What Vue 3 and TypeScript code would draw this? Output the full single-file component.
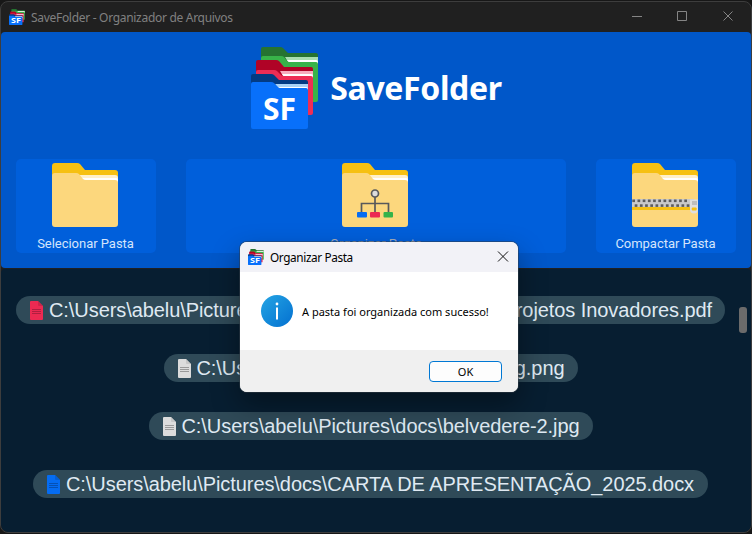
<script setup lang="ts">
interface FileRow {
  head: string
  tail?: string
  color: string
  line: string
  fold: string
  width: number
}

interface Action {
  label: string
  kind: 'plain' | 'tree' | 'zip'
}

const actions: Action[] = [
  { label: 'Selecionar Pasta', kind: 'plain' },
  { label: 'Organizar Pasta', kind: 'tree' },
  { label: 'Compactar Pasta', kind: 'zip' },
]

const files: FileRow[] = [
  { head: 'C:\\Users\\abelu\\Pictures', tail: 'Projetos Inovadores.pdf', color: '#ec2a52', line: '#b01f40', fold: '#c32246', width: 709 },
  { head: 'C:\\Users\\abelu', tail: 'g.png', color: '#dcdcdc', line: '#999999', fold: '#bdbdbd', width: 414 },
  { head: 'C:\\Users\\abelu\\Pictures\\docs\\belvedere-2.jpg', color: '#dcdcdc', line: '#999999', fold: '#bdbdbd', width: 444 },
  { head: 'C:\\Users\\abelu\\Pictures\\docs\\CARTA DE APRESENTAÇÃO_2025.docx', color: '#056cf2', line: '#0451b5', fold: '#0559c8', width: 675 },
]

const teeth = Array.from({ length: 11 }, (_, i) => i)
</script>

<template>
  <svg class="defs" width="0" height="0" aria-hidden="true">
    <symbol id="logo" viewBox="0 0 68 82" overflow="visible">
      <path d="M10 2q0-2 2-2h17q2 0 3 1l5 5h28q2 0 2 2v10H10z" fill="#267331" />
      <path d="M34 10h33v10H40z" fill="#a9dfb0" />
      <path d="M36 13h29q2 0 2 2v6H42z" fill="#fff" />
      <path d="M10 11q0-2 2-2h18q2 0 3 1l3 4q1 1 2 1h27q2 0 2 2v36q0 2-2 2H12q-2 0-2-2z" fill="#38b349" />
      <path d="M5 15q0-2 2-2h18q2 0 3 1l5 6h27q2 0 2 2v10H5z" fill="#b00326" />
      <path d="M29 24h33v10H35z" fill="#f8acbd" />
      <path d="M31 27h29q2 0 2 2v6H37z" fill="#fff" />
      <path d="M5 25q0-2 2-2h16q2 0 3 1l4 4q1 1 2 1h28q2 0 2 2v35q0 2-2 2H7q-2 0-2-2z" fill="#ee2d55" />
      <path d="M0 29q0-2 2-2h18q2 0 3 1l5 5h27q2 0 2 2v10H0z" fill="#033b83" />
      <path d="M24 37h33v9H30z" fill="#a9d2f6" />
      <path d="M26 40h29q2 0 2 2v6H32z" fill="#fff" />
      <path d="M0 37q0-2 2-2h18q2 0 3 1l4 4q1 1 2 1h26q2 0 2 2v37q0 2-2 2H2q-2 0-2-2z" fill="#0870fa" />
    </symbol>
  </svg>

  <div class="window">
    <header class="titlebar">
      <svg class="app-icon" viewBox="0 0 68 82" preserveAspectRatio="none">
        <use href="#logo" width="68" height="82" />
        <text x="9" y="74" class="logo-text small" textLength="42" lengthAdjust="spacingAndGlyphs">SF</text>
      </svg>
      <span class="window-title">SaveFolder - Organizador de Arquivos</span>
      <svg class="controls" width="104" height="12" viewBox="0 0 104 12">
        <path d="M1 5.500h10M46.500 .500h9v9h-9zM92.500 .500l9 9M101.500 .500l-9 9" />
      </svg>
    </header>

    <section class="hero">
      <div class="brand">
        <svg width="68" height="82">
          <use href="#logo" width="68" height="82" />
          <text x="12" y="72.600" class="logo-text" textLength="33" lengthAdjust="spacingAndGlyphs">SF</text>
        </svg>
        <h1>SaveFolder</h1>
      </div>
      <div class="actions">
        <button v-for="action in actions" :key="action.kind" class="action" :class="action.kind">
          <svg width="66" height="64" viewBox="0 0 66 64">
            <path d="M0 3q0-3 3-3h22q2 0 3 1l5 6h30q3 0 3 3v12H0z" fill="#f6c012" />
            <path d="M26 12h37q3 0 3 3v9H32z" fill="#fff0ca" />
            <path d="M28 15h36q2 0 2 3v6H34z" fill="#fff" />
            <path d="M0 13q0-3 3-3h21q2 0 3 1l4 5q1 1 3 1h29q3 0 3 3v41q0 3-3 3H3q-3 0-3-3z" fill="#fcd77d" />
            <g v-if="action.kind === 'tree'">
              <path d="M33 34v16M19.500 50v-9.500h27V50" fill="none" stroke="#58595b" stroke-width="1.700" />
              <circle cx="33" cy="30.500" r="3.500" fill="#dcdcdc" stroke="#58595b" stroke-width="1.700" />
              <rect x="15" y="49" width="10" height="5.500" rx="1" fill="#056cf2" />
              <rect x="28" y="49" width="10" height="5.500" rx="1" fill="#ec2a52" />
              <rect x="41.500" y="49" width="9.500" height="5.500" rx="1" fill="#34b34a" />
            </g>
            <g v-if="action.kind === 'zip'">
              <path d="M0 44h66v3H0z" fill="#f6c012" />
              <path d="M0 36h62v8H0z" fill="#c9c9c9" />
              <g fill="#5c5c5c">
                <rect v-for="n in teeth" :key="n" :x="n * 5.2 + .3" y="36.500" width="2.700" height="2.600" />
                <rect v-for="n in teeth" :key="'b' + n" :x="n * 5.2 + 2.700" y="41.300" width="2.700" height="2.600" />
              </g>
              <path d="M58 36.500h8v10q0 4-4 4t-4-4z" fill="#dedede" />
              <path d="M60 38h5v4h-5z" fill="#bdbdbd" />
              <rect x="59.700" y="44.500" width="5" height="3" rx="1" fill="#f6c012" />
            </g>
          </svg>
          <span>{{ action.label }}</span>
        </button>
      </div>
    </section>

    <main class="list-panel">
      <ul class="files">
        <li v-for="file in files" :key="file.head" class="file" :style="{ width: file.width + 'px' }">
          <svg width="13" height="19" viewBox="0 0 13 19">
            <path d="M0 1q0-1 1-1h7l5 5v13q0 1-1 1H1q-1 0-1-1z" :fill="file.color" />
            <path d="M8 0v4q0 1 1 1h4z" :fill="file.fold" opacity=".7" />
            <path d="M2 8.500h9M2 10.500h9M2 12.500h9" :stroke="file.line" />
          </svg>
          <span>{{ file.head }}</span>
          <span v-if="file.tail" class="tail">{{ file.tail }}</span>
        </li>
      </ul>
      <div class="scrollbar"><div class="thumb"></div></div>
    </main>
  </div>

  <div class="dialog" role="dialog">
    <div class="dialog-head">
      <svg class="app-icon" viewBox="0 0 68 82" preserveAspectRatio="none">
        <use href="#logo" width="68" height="82" />
        <text x="9" y="74" class="logo-text small" textLength="42" lengthAdjust="spacingAndGlyphs">SF</text>
      </svg>
      <span class="dialog-title">Organizar Pasta</span>
      <svg class="close" width="12" height="12" viewBox="0 0 12 12"><path d="M1 .5l10 10M11 .5L1 10.500" /></svg>
    </div>
    <div class="dialog-body">
      <svg width="32" height="32" viewBox="0 0 32 32">
        <defs>
          <linearGradient id="info" x1="0" y1="0" x2="1" y2="1">
            <stop offset="0" stop-color="#25a5e4" />
            <stop offset="1" stop-color="#0370d0" />
          </linearGradient>
        </defs>
        <circle cx="16" cy="16" r="16" fill="url(#info)" />
        <circle cx="16" cy="9" r="1.400" fill="#fff" />
        <path d="M16 12.500v12" stroke="#fff" stroke-width="2" />
      </svg>
      <span class="message">A pasta foi organizada com sucesso!</span>
    </div>
    <div class="dialog-foot"><button class="ok">OK</button></div>
  </div>
</template>

<style>
body {
  margin: 0;
  background: #171717;
  overflow: hidden;
}
</style>

<style scoped>
* {
  box-sizing: border-box;
}
.defs {
  position: absolute;
}
.logo-text {
  font: 700 30px 'Noto Sans', sans-serif;
  fill: #fff;
}
.logo-text.small {
  font-size: 36px;
}
.window {
  width: 752px;
  height: 532px;
  margin-top: 1px;
  border: 1px solid #3d3d3d;
  border-radius: 8px;
  background: #202020;
  overflow: hidden;
  display: flex;
  flex-direction: column;
}
.titlebar {
  height: 30px;
  flex: none;
  display: flex;
  align-items: center;
  padding: 0 16px 0 8px;
}
.app-icon {
  width: 16px;
  height: 16px;
}
.window-title {
  margin-left: 6px;
  font: 12px 'Noto Sans', sans-serif;
  letter-spacing: -0.3px;
  color: #808080;
  white-space: nowrap;
}
.controls {
  margin-left: auto;
  fill: none;
  stroke: #858585;
}
.hero {
  height: 236px;
  flex: none;
  border-radius: 4px;
  background: #0057c9;
  padding: 15px 14px 0 15px;
}
.brand {
  display: flex;
  align-items: center;
  justify-content: center;
  gap: 11px;
  height: 82px;
}
h1 {
  margin: 0;
  font: 700 32px/44px 'Noto Sans', sans-serif;
  letter-spacing: -0.35px;
  color: #fff;
}
.actions {
  display: grid;
  grid-template-columns: 140px 380px 140px;
  gap: 30px;
  margin-top: 30px;
}
.action {
  height: 94px;
  padding: 4px 2px 0 0;
  border: 0;
  border-radius: 5px;
  background: #005fdb;
  color: #d5e5fb;
  font: 13px/16px Roboto, sans-serif;
  display: flex;
  flex-direction: column;
  align-items: center;
  gap: 9px;
}
.action span {
  padding-left: 1px;
  letter-spacing: -0.03px;
}
.action.tree {
  color: #a3adbb;
}
.action.tree span {
  padding-left: 2px;
}
.action svg,
.brand svg {
  flex: none;
}
.list-panel {
  flex: 1;
  margin-top: 1px;
  border-radius: 4px 4px 7px 7px;
  background: #071e31;
  display: flex;
}
.files {
  list-style: none;
  margin: 0;
  padding: 27px 0 0;
  width: 739px;
  display: flex;
  flex-direction: column;
  align-items: center;
  gap: 30px;
}
.file {
  height: 28px;
  border-radius: 14px;
  background: #2f4a58;
  color: #dfe9f2;
  display: flex;
  align-items: center;
  padding: 0 13px 0 14px;
  font: 20px/28px 'Liberation Sans', Arial, sans-serif;
  letter-spacing: -0.075px;
  white-space: nowrap;
}
.file svg {
  flex: none;
  margin-right: 6px;
}
.tail {
  margin-left: auto;
}
.scrollbar {
  padding-top: 38px;
  margin-left: -1px;
}
.thumb {
  width: 8px;
  height: 26px;
  border-radius: 3px;
  background: #6b6b6b;
}
.dialog {
  position: absolute;
  left: 240px;
  top: 242px;
  width: 278px;
  height: 150px;
  border-radius: 7px;
  background: #fff;
  box-shadow: 0 0 0 1px rgba(50, 60, 70, 0.5), 0 12px 28px 0 rgba(0, 0, 0, 0.38);
  color: #000;
  font: 12px 'Noto Sans', sans-serif;
}
.dialog-head {
  height: 30px;
  display: flex;
  align-items: center;
  padding: 0 9px 0 8px;
  background: #f2f2f7;
  border-radius: 7px 7px 0 0;
}
.dialog-title {
  margin-left: 6px;
  font-size: 11.800px;
  letter-spacing: -0.38px;
}
.close {
  margin-left: auto;
  stroke: #111;
}
.dialog-body {
  height: 78px;
  display: flex;
  align-items: center;
  gap: 9px;
  padding-left: 21px;
}
.message {
  font-size: 11px;
  white-space: nowrap;
}
.dialog-foot {
  height: 42px;
  display: flex;
  justify-content: flex-end;
  padding: 11px 16px 0 0;
  background: #f0f0f0;
  border-radius: 0 0 7px 7px;
}
.ok {
  width: 73px;
  height: 21px;
  padding: 0;
  border: 1px solid #0078d4;
  border-radius: 4px;
  background: #fdfdfd;
  color: #000;
  font: 11px/19px 'Noto Sans', sans-serif;
}
</style>
